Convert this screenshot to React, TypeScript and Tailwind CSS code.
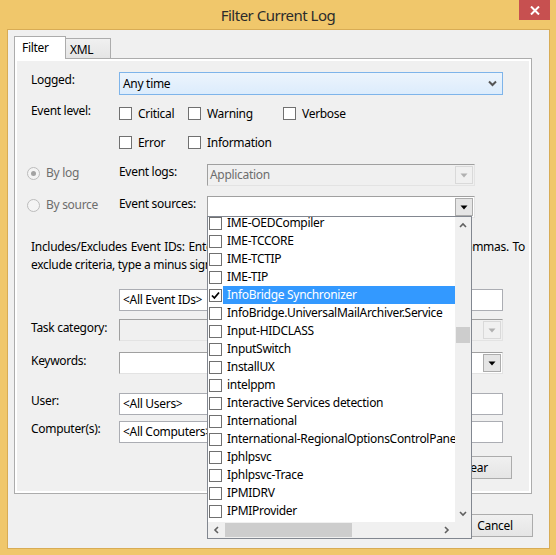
import React from "react";

const sources = [
  "IME-OEDCompiler",
  "IME-TCCORE",
  "IME-TCTIP",
  "IME-TIP",
  "InfoBridge Synchronizer",
  "InfoBridge.UniversalMailArchiver.Service",
  "Input-HIDCLASS",
  "InputSwitch",
  "InstallUX",
  "intelppm",
  "Interactive Services detection",
  "International",
  "International-RegionalOptionsControlPane",
  "Iphlpsvc",
  "Iphlpsvc-Trace",
  "IPMIDRV",
  "IPMIProvider",
];

function Check({ checked = false }: { checked?: boolean }) {
  return (
    <span className="flex h-[13px] w-[13px] shrink-0 items-center justify-center border border-[#707070] bg-white">
      {checked && (
        <svg width="9" height="9" viewBox="0 0 9 9">
          <path d="M1 4.5 L3.4 7 L8 1.5" fill="none" stroke="#000" strokeWidth="1.8" />
        </svg>
      )}
    </span>
  );
}

function Radio({ checked = false }: { checked?: boolean }) {
  return (
    <span className="flex h-[13px] w-[13px] shrink-0 items-center justify-center rounded-full border border-[#bcbcbc] bg-[#f4f4f4]">
      {checked && <span className="h-[5px] w-[5px] rounded-full bg-[#a3a3a3]" />}
    </span>
  );
}

function Triangle({ color }: { color: string }) {
  return (
    <svg width="8" height="5" viewBox="0 0 8 5">
      <path d="M0.5 0.5 H7.5 L4 4.5 Z" fill={color} />
    </svg>
  );
}

function Chevron({ dir, color = "#606060" }: { dir: "up" | "down" | "left" | "right"; color?: string }) {
  const d = {
    up: "M1 5 L4 2 L7 5",
    down: "M1 2 L4 5 L7 2",
    left: "M5 1 L2 4 L5 7",
    right: "M2 1 L5 4 L2 7",
  }[dir];
  return (
    <svg width="8" height="8" viewBox="0 0 8 8">
      <path d={d} fill="none" stroke={color} strokeWidth="1.6" />
    </svg>
  );
}

function Combo({ width, disabled = false, text = "" }: { width: string; disabled?: boolean; text?: string }) {
  return (
    <div
      className={`flex h-[22px] ${width} items-center border-t border-l border-[#a0a0a0] border-r-[#e3e3e3] border-b-[#e3e3e3] border-r border-b pr-[1px] ${
        disabled ? "bg-[#f0f0f0]" : "bg-white"
      }`}
    >
      <span className={`flex-1 pl-[2px] ${disabled ? "text-[#6d6d6d]" : ""}`}>{text}</span>
      <span
        className={`flex h-[18px] w-[18px] items-center justify-center border ${
          disabled ? "border-[#d9d9d9] bg-[#f0f0f0]" : "border-[#acacac] bg-[#e5e5e5]"
        }`}
      >
        <Triangle color={disabled ? "#b0b0b0" : "#000"} />
      </span>
    </div>
  );
}

function TextBox({ text = "" }: { text?: string }) {
  return (
    <div className="flex h-[22px] w-[384px] items-center border border-[#abadb3] bg-white pl-[3px]">{text}</div>
  );
}

function Button({ children }: { children: React.ReactNode }) {
  return (
    <div className="flex h-[23px] w-[76px] items-center justify-center border border-[#acacac] bg-gradient-to-b from-[#f0f0f0] to-[#e5e5e5]">
      {children}
    </div>
  );
}

export default function App() {
  return (
    <div className="flex h-[555px] w-[556px] flex-col bg-[#f0c76b] font-['Segoe_UI','Noto_Sans',sans-serif] text-[12px] leading-[16px] tracking-[-0.3px] text-black">
      {/* title bar */}
      <div className="relative flex h-[29px] items-center justify-center">
        <span className="text-[15px] tracking-[-0.5px] text-[#2b2b2b]">Filter Current Log</span>
        <div className="absolute right-[6px] top-0 flex h-[20px] w-[31px] items-center justify-center bg-[#c75050]">
          <svg width="10" height="9" viewBox="0 0 10 9">
            <path d="M1 0.5 L9 8.5 M9 0.5 L1 8.5" stroke="#fff" strokeWidth="2" />
          </svg>
        </div>
      </div>

      {/* client */}
      <div className="relative ml-[7px] h-[520px] w-[543px] border border-[#d8ac55] bg-[#f0f0f0] pl-[6px] pt-[6px]">
        {/* tabs */}
        <div className="flex h-[22px] items-end">
          <div className="relative z-10 -mb-[1px] flex h-[23px] w-[52px] border border-b-0 border-[#acacac] bg-white pl-[7px] pt-[3px]">
            Filter
          </div>
          <div className="flex h-[20px] w-[45px] border border-l-0 border-b-0 border-[#acacac] bg-gradient-to-b from-[#f0f0f0] to-[#e5e5e5] pl-[4px] pt-[3px]">
            XML
          </div>
        </div>

        {/* tab panel */}
        <div className="h-[436px] w-[518px] border border-[#acacac] bg-white p-[2px]">
          <div className="flex h-full flex-col bg-[#f0f0f0] pl-[14px] pt-[11px]">
            {/* logged */}
            <div className="flex items-start">
              <span className="w-[88px]">Logged:</span>
              <div className="flex h-[23px] w-[384px] items-center justify-between border border-[#7eb4ea] bg-gradient-to-b from-[#ecf4fc] to-[#dcecfc] pl-[3px] pr-[5px]">
                <span>Any time</span>
                <svg width="9" height="7" viewBox="0 0 9 7">
                  <path d="M1 1.5 L4.5 5 L8 1.5" fill="none" stroke="#555" strokeWidth="2" />
                </svg>
              </div>
            </div>

            {/* event level */}
            <div className="mt-[12px] flex items-start">
              <span className="-mt-[4px] w-[88px]">Event level:</span>
              <div className="flex flex-col gap-[16px]">
                <div className="flex h-[13px] items-center">
                  <label className="flex w-[69px] items-center gap-[6px]">
                    <Check />
                    <span>Critical</span>
                  </label>
                  <label className="flex w-[95px] items-center gap-[6px]">
                    <Check />
                    <span>Warning</span>
                  </label>
                  <label className="flex items-center gap-[6px]">
                    <Check />
                    <span>Verbose</span>
                  </label>
                </div>
                <div className="flex h-[13px] items-center">
                  <label className="flex w-[69px] items-center gap-[6px]">
                    <Check />
                    <span>Error</span>
                  </label>
                  <label className="flex items-center gap-[6px]">
                    <Check />
                    <span>Information</span>
                  </label>
                </div>
              </div>
            </div>

            {/* by log */}
            <div className="-ml-[4px] mt-[15px] flex items-start">
              <div className="flex w-[92px] items-center gap-[6px] pt-[1px] text-[#6d6d6d]">
                <Radio checked />
                <span>By log</span>
              </div>
              <span className="w-[88px]">Event logs:</span>
              <Combo width="w-[268px]" disabled text="Application" />
            </div>

            {/* by source */}
            <div className="-ml-[4px] mt-[10px] flex items-start">
              <div className="flex w-[92px] items-center gap-[6px] pt-[1px] text-[#6d6d6d]">
                <Radio />
                <span>By source</span>
              </div>
              <span className="w-[88px]">Event sources:</span>
              <Combo width="w-[268px]" />
            </div>

            {/* includes text */}
            <div className="mt-[20px] w-[494px] leading-[18px]">
              <div className="whitespace-nowrap text-justify [text-align-last:justify]">
                Includes/Excludes Event IDs: Enter ID numbers and/or ID ranges separated by commas. To
              </div>
              <div className="whitespace-nowrap">exclude criteria, type a minus sign first. For example 1,3,5-99,-76</div>
            </div>

            <div className="ml-[88px] mt-[15px]">
              <TextBox text="<All Event IDs>" />
            </div>

            <div className="mt-[8px] flex items-start">
              <span className="w-[88px] pt-[1px]">Task category:</span>
              <Combo width="w-[384px]" disabled />
            </div>

            <div className="mt-[11px] flex items-start">
              <span className="w-[88px] pt-[1px]">Keywords:</span>
              <Combo width="w-[384px]" />
            </div>

            <div className="mt-[19px] flex items-start">
              <span className="w-[88px]">User:</span>
              <TextBox text="<All Users>" />
            </div>

            <div className="mt-[6px] flex items-start">
              <span className="w-[88px]">Computer(s):</span>
              <TextBox text="<All Computers>" />
            </div>

            <div className="mt-[13px] flex justify-end pr-[17px]">
              <Button>Clear</Button>
            </div>
          </div>
        </div>

        {/* dialog buttons */}
        <div className="mt-[20px] flex justify-end gap-[5px] pr-[16px]">
          <Button>OK</Button>
          <Button>Cancel</Button>
        </div>

        {/* open dropdown list */}
        <div className="absolute left-[199px] top-[186px] z-20 flex h-[323px] w-[265px] flex-col border border-[#828790] bg-white">
          <div className="flex h-[305px]">
            <div className="w-[247px] overflow-hidden">
              <div className="-mt-[3px]">
                {sources.map((s, i) => (
                  <div key={s} className="flex h-[18px] items-center">
                    <span className="ml-[1px] mr-[1px]">
                      <Check checked={i === 4} />
                    </span>
                    <span
                      className={`flex h-[18px] flex-1 items-center whitespace-nowrap pl-[4px] ${
                        i === 4 ? "bg-[#3399ff] text-white" : ""
                      }`}
                    >
                      {s}
                    </span>
                  </div>
                ))}
              </div>
            </div>
            <div className="flex w-[16px] flex-col bg-[#f0f0f0]">
              <div className="flex h-[17px] items-center justify-center">
                <Chevron dir="up" />
              </div>
              <div className="flex-1">
                <div className="ml-[1px] mt-[93px] h-[16px] w-[14px] bg-[#cdcdcd]" />
              </div>
              <div className="flex h-[17px] items-center justify-center">
                <Chevron dir="down" />
              </div>
            </div>
          </div>
          <div className="flex h-[16px] bg-[#f0f0f0]">
            <div className="flex w-[17px] items-center justify-center">
              <Chevron dir="left" />
            </div>
            <div className="flex w-[213px] items-center">
              <div className="h-[14px] w-[127px] bg-[#cdcdcd]" />
            </div>
            <div className="flex w-[17px] items-center justify-center">
              <Chevron dir="right" />
            </div>
            <div className="w-[16px]" />
          </div>
        </div>
      </div>
    </div>
  );
}
